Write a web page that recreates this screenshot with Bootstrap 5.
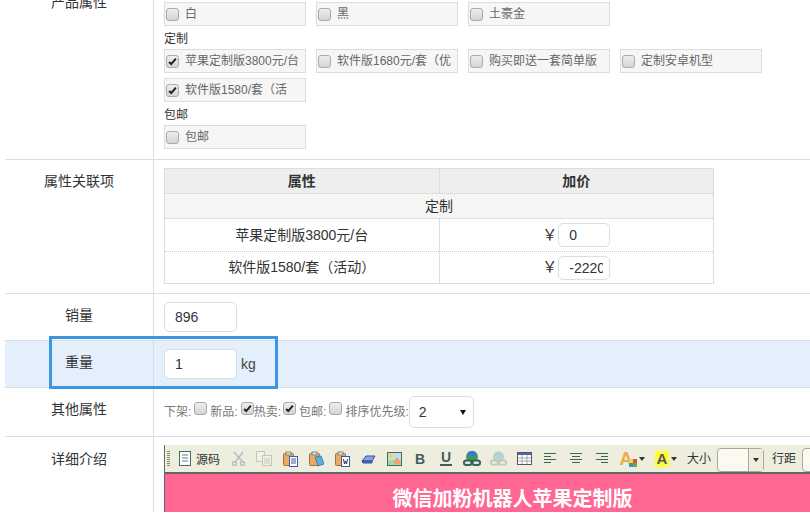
<!DOCTYPE html>
<html lang="zh-CN">
<head>
<meta charset="utf-8">
<title>产品编辑</title>
<link rel="stylesheet" href="https://cdn.jsdelivr.net/npm/bootstrap@5.3.0/dist/css/bootstrap.min.css">
<style>
html,body{height:513px;overflow:hidden;background:#fff}
body{font-family:"Liberation Sans","Noto Sans CJK SC",sans-serif;font-size:12px;color:#333;position:relative}
.sheet{margin:-20px 0 0 5px;width:900px}
.frow{border-bottom:1px solid #ddd}
.frow-hl{background:#e3effb}
.flabel{flex:0 0 148px;font-size:14px;text-align:center;padding-top:10px;line-height:22px;color:#333}
.flabel-low{padding-top:11px}
.fbody{flex:1 1 auto;border-left:1px solid #ddd;padding:8px 10px}
.first-body{padding-top:22px}
.table-body{padding-bottom:9px}
.opt-grid{display:flex;flex-wrap:wrap;gap:5px 10px;width:610px}
.opt{width:142px;height:24px;background:#f6f6f6;border:1px solid #ddd;display:flex;align-items:center;gap:6px;padding-left:1px;font-size:12px;line-height:20px;color:#666;white-space:nowrap;overflow:hidden;margin:0}
.cbx{appearance:none;-webkit-appearance:none;width:13px;height:13px;flex:none;border:1px solid #aaa;border-radius:3px;background:linear-gradient(#eee,#d4d4d4);margin:0;vertical-align:-2px}
.cbx:checked{background-image:url("data:image/svg+xml,%3Csvg xmlns='http://www.w3.org/2000/svg' viewBox='0 0 13 13'%3E%3Cpath d='M2.5 7l2.500 2.500L10.500 3' fill='none' stroke='%23222' stroke-width='2.4'/%3E%3C/svg%3E"),linear-gradient(#eee,#d4d4d4)}
.grp{font-size:12px;color:#333;line-height:16px;margin:5px 0 2px}
.attr-table{width:550px;margin:0;border:1px solid #ddd;font-size:14px;color:#333;table-layout:fixed}
.attr-table th,.attr-table td{padding:0;text-align:center;vertical-align:middle;border-bottom:1px dotted #ccc;color:#333;background:transparent;box-shadow:none}
.attr-table th{height:25px;background:#eee;font-weight:700;font-size:14px}
.attr-table th+th,.attr-table td+td{border-left:1px solid #ddd}
.attr-table .sub td{height:25px;background:#f5f5f5}
.attr-table .it td{height:33px}
.attr-table tr:last-child td{border-bottom:0;height:32px}
.num{display:inline-block;width:52px;height:24px;padding:0 6px 0 10px;border:1px solid #ddd;border-radius:5px;font-size:14px;color:#333;box-shadow:none;vertical-align:middle;font-family:inherit}
.yen{font-size:15px;margin-right:1px;vertical-align:middle}
.wide{width:73px;height:30px;font-size:14px;padding-left:10px;border-radius:5px;border:1px solid #ddd;color:#333}
.unit{font-size:14px;color:#444;margin-left:4px}
.other{font-size:12px;color:#777;height:32px}
.other .cbx{margin:0 3px 8px 3px}
.other .cbx.tight{margin-right:0}
.other .cbx.wide-r{margin-left:2px}
.pick{width:65px;height:32px;border:1px solid #ddd;border-radius:5px;padding:0 0 0 9px;font-size:14px;color:#333;background:#fff;display:flex;align-items:center;justify-content:space-between}
.pick i{border:3px solid transparent;border-top:5px solid #111;border-bottom:0;margin-right:7px}
.editor{width:696px;border-left:1px solid #666}
.tools{height:29px;background:#edeedd;border-bottom:2px solid #666;align-items:center;overflow:hidden;flex-wrap:nowrap}
.grip{width:3px;height:15px;margin:0 8px 0 2px;flex:none;background:repeating-linear-gradient(#8a8a6a 0 1px,#edeedd 1px 2px)}
.tb{width:26px;height:20px;display:flex;align-items:center;justify-content:center;flex:none}
.tb svg{display:block}
.srcbtn{font-size:12px;color:#333;margin:3px 5px 0 5px;flex:none}
.bold-ic{font:900 14px "Liberation Sans",sans-serif;color:#3f5f5f}
.ul-ic{font:700 14px/13px "Liberation Sans",sans-serif;color:#3f5f5f;border-bottom:2px solid #3f5f5f;padding:0 1px}
.color-ic{width:34px;flex:none;display:flex;align-items:center;justify-content:center;gap:2px}
.ca-wrap{position:relative;display:block;width:17px;height:16px}
.ca{font:900 18px/16px "Liberation Sans",sans-serif;color:#f0a850}
.ca-wrap svg{position:absolute;right:0;bottom:0}
.cb{font:900 15px/16px "Liberation Sans",sans-serif;color:#556;background:#ffff33;padding:0 2px}
.arw{display:block;border:3px solid transparent;border-top:4px solid #333;border-bottom:0}
.tlabel{font-size:12px;color:#333;flex:none}
.combo{width:47px;height:24px;flex:none;border:1px solid #aaa89a;border-radius:4px;background:#fafaf0;display:flex;justify-content:flex-end;align-items:center;margin:2px 8px 0 6px}
.combo span{width:15px;height:100%;background:#edeedd;border-left:1px solid #aaa89a;display:flex;align-items:center;justify-content:center}
.banner{height:38px;background:#ff6692;color:#fff;font:700 20px/48px "Noto Sans CJK SC",serif;text-align:center;overflow:hidden}
.callout{position:absolute;left:49px;top:336px;width:229px;height:53px;border:3px solid #3b96e3;pointer-events:none}
</style>
</head>
<body>
<div class="sheet">
  <div class="frow d-flex" style="height:180px">
    <div class="flabel flabel-low">产品属性</div>
    <div class="fbody first-body">
      <div class="opt-grid">
        <label class="opt"><input class="cbx" type="checkbox">白</label>
        <label class="opt"><input class="cbx" type="checkbox">黑</label>
        <label class="opt"><input class="cbx" type="checkbox">土豪金</label>
      </div>
      <div class="grp">定制</div>
      <div class="opt-grid">
        <label class="opt"><input class="cbx" type="checkbox" checked>苹果定制版3800元/台</label>
        <label class="opt"><input class="cbx" type="checkbox">软件版1680元/套（优</label>
        <label class="opt"><input class="cbx" type="checkbox">购买即送一套简单版</label>
        <label class="opt"><input class="cbx" type="checkbox">定制安卓机型</label>
        <label class="opt"><input class="cbx" type="checkbox" checked>软件版1580/套（活</label>
      </div>
      <div class="grp">包邮</div>
      <div class="opt-grid">
        <label class="opt"><input class="cbx" type="checkbox">包邮</label>
      </div>
    </div>
  </div>
  <div class="frow d-flex">
    <div class="flabel">属性关联项</div>
    <div class="fbody table-body">
      <table class="table attr-table">
        <thead><tr><th>属性</th><th>加价</th></tr></thead>
        <tbody>
          <tr class="sub"><td colspan="2">定制</td></tr>
          <tr class="it"><td>苹果定制版3800元/台</td><td><span class="yen">￥</span><input class="form-control num" value="0"></td></tr>
          <tr class="it"><td>软件版1580/套（活动）</td><td><span class="yen">￥</span><input class="form-control num" value="-2220"></td></tr>
        </tbody>
      </table>
    </div>
  </div>
  <div class="frow d-flex">
    <div class="flabel">销量</div>
    <div class="fbody d-flex align-items-center"><input class="form-control wide" value="896"></div>
  </div>
  <div class="frow frow-hl d-flex">
    <div class="flabel">重量</div>
    <div class="fbody d-flex align-items-center"><input class="form-control wide" value="1"><span class="unit">kg</span></div>
  </div>
  <div class="frow d-flex">
    <div class="flabel">其他属性</div>
    <div class="fbody">
      <div class="other d-flex align-items-center">
        下架:<input class="cbx" type="checkbox">新品:<input class="cbx tight" type="checkbox" checked>热卖:<input class="cbx wide-r" type="checkbox" checked>包邮:<input class="cbx" type="checkbox">排序优先级:<div class="pick">2<i></i></div>
      </div>
    </div>
  </div>
  <div class="d-flex">
    <div class="flabel flabel-low">详细介绍</div>
    <div class="fbody" style="padding-bottom:0">
      <div class="editor">
        <div class="tools d-flex">
          <div class="grip"></div>
          <div class="tb" style="width:13px"><svg width="12" height="15" viewBox="0 0 12 15"><rect x=".5" y=".5" width="11" height="14" fill="#fff" stroke="#4a6a6a"/><path d="M3 4h6M3 7h6M3 10h6" stroke="#4a8a7a"/></svg></div>
          <span class="srcbtn">源码</span>
          <div class="tb"><svg width="15" height="16" viewBox="0 0 15 16" fill="none" stroke="#b4bcc4" stroke-width="1.5"><path d="M12 1L5 10M3 1l8 9"/><circle cx="3.500" cy="12.500" r="2"/><circle cx="11.500" cy="12.500" r="2"/></svg></div>
          <div class="tb"><svg width="16" height="15" viewBox="0 0 16 15" fill="#f1f1e4" stroke="#c4c8bc"><rect x=".5" y=".5" width="8" height="10"/><rect x="6.500" y="4.500" width="9" height="10"/><path d="M8 8h6M8 10h6M8 12h6"/></svg></div>
          <div class="tb"><svg width="15" height="16" viewBox="0 0 15 16"><rect x=".5" y="2.500" width="10" height="12" rx="1" fill="#eeaa60" stroke="#a07040"/><rect x="3" y="1" width="5" height="3" fill="#ddd" stroke="#887"/><rect x="6.500" y="5.500" width="8" height="10" fill="#fff" stroke="#3a5aaa"/><path d="M8 8h5M8 10h5M8 12h5" stroke="#3a5aaa"/></svg></div>
          <div class="tb"><svg width="15" height="16" viewBox="0 0 15 16"><rect x=".5" y="2.500" width="10" height="12" rx="1" fill="#eeaa60" stroke="#a07040"/><rect x="3" y="1" width="5" height="3" fill="#ddd" stroke="#887"/><path d="M6 6l6-1 3 8-6 2z" fill="#5ab0e0" stroke="#4080b0"/></svg></div>
          <div class="tb"><svg width="15" height="16" viewBox="0 0 15 16"><rect x=".5" y="2.500" width="10" height="12" rx="1" fill="#eeaa60" stroke="#a07040"/><rect x="3" y="1" width="5" height="3" fill="#ddd" stroke="#887"/><rect x="6.500" y="5.500" width="8" height="10" fill="#fff" stroke="#3a5aaa"/><path d="M8.500 8l1 5 1-3 1 3 1-5" fill="none" stroke="#334"/></svg></div>
          <div class="tb"><svg width="15" height="10" viewBox="0 0 15 10"><path d="M1 7l4-5h9l-3 5z" fill="#88a4e8" stroke="#3a50a0"/><path d="M1 7h10v2H2z" fill="#4a68c0" stroke="#3a50a0"/></svg></div>
          <div class="tb"><svg width="15" height="14" viewBox="0 0 15 14"><rect x=".5" y=".5" width="14" height="13" fill="#a8d8a0" stroke="#4a6a5a"/><rect x="1" y="1" width="13" height="7" fill="#bfe0f0"/><circle cx="4" cy="4" r="2" fill="#f0d040"/><path d="M7 9l3-4 3 4v3H7z" fill="#f0a070"/></svg></div>
          <div class="tb"><span class="bold-ic">B</span></div>
          <div class="tb"><span class="ul-ic">U</span></div>
          <div class="tb"><svg width="18" height="15" viewBox="0 0 18 15"><circle cx="9" cy="6" r="6" fill="#3e9a5e"/><path d="M4.500 2a6 6 0 0 1 9 0L12 5H9L8 3 6 5z" fill="#3a76d8"/><rect x="1" y="9.500" width="7.500" height="4.500" rx="2" fill="#dfe8dc" stroke="#3f5f5f" stroke-width="2"/><rect x="9.500" y="9.500" width="7.500" height="4.500" rx="2" fill="#dfe8dc" stroke="#3f5f5f" stroke-width="2"/></svg></div>
          <div class="tb"><svg width="17" height="15" viewBox="0 0 18 15"><circle cx="9" cy="6" r="6" fill="#b8d8c0"/><path d="M4.500 2a6 6 0 0 1 9 0L12 5H9L8 3 6 5z" fill="#b8c8e8"/><rect x="1" y="9.500" width="7.500" height="4.500" rx="2" fill="none" stroke="#c0c8c0" stroke-width="2"/><rect x="9.500" y="9.500" width="7.500" height="4.500" rx="2" fill="none" stroke="#c0c8c0" stroke-width="2"/></svg></div>
          <div class="tb"><svg width="15" height="13" viewBox="0 0 15 13"><rect x=".5" y=".5" width="14" height="12" fill="#fff" stroke="#556"/><rect x="1" y="1" width="13" height="2" fill="#4a68b0"/><path d="M1 6h13M1 9h13M5 3v9M10 3v9" stroke="#aaa89a"/></svg></div>
          <div class="tb"><svg width="12" height="11" viewBox="0 0 12 11" stroke="#44605c"><path d="M0 .5h12M0 3.500h7M0 6.500h12M0 9.500h7"/></svg></div>
          <div class="tb"><svg width="12" height="11" viewBox="0 0 12 11" stroke="#44605c"><path d="M0 .5h12M2 3.500h8M0 6.500h12M2 9.500h8"/></svg></div>
          <div class="tb"><svg width="12" height="11" viewBox="0 0 12 11" stroke="#44605c"><path d="M0 .5h12M5 3.500h7M0 6.500h12M5 9.500h7"/></svg></div>
          <div class="color-ic"><span class="ca-wrap"><span class="ca">A</span><svg width="8" height="8" viewBox="0 0 8 8"><rect x="0" width="4" height="4" fill="#e9dd3a"/><rect x="4" width="4" height="4" fill="#e8503a"/><rect y="4" width="4" height="4" fill="#3f8fd8"/><rect x="4" y="4" width="4" height="4" fill="#5ab04a"/></svg></span><span class="arw"></span></div>
          <div class="color-ic"><span class="cb">A</span><span class="arw"></span></div>
          <span class="tlabel ms-1">大小</span>
          <div class="combo"><span><i class="arw"></i></span></div>
          <span class="tlabel">行距</span>
          <div class="combo"><span><i class="arw"></i></span></div>
        </div>
        <div class="banner">微信加粉机器人苹果定制版</div>
      </div>
    </div>
  </div>
</div>
<div class="callout"></div>
</body>
</html>
